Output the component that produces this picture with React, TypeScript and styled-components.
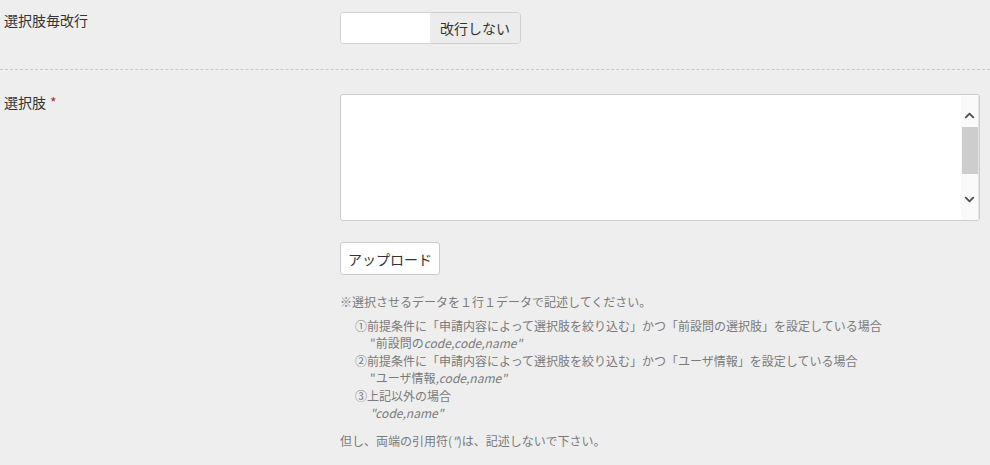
import React from "react";
import styled, { createGlobalStyle } from "styled-components";
import { ChevronUp, ChevronDown } from "lucide-react";

const GlobalStyle = createGlobalStyle`
  body {
    margin: 0;
    background: #eeeeee;
    font-family: "Noto Sans CJK JP", "Noto Sans", sans-serif;
    color: #333;
  }
`;

const Page = styled.div`
  width: 990px;
`;

const Row = styled.div<{ $divider?: boolean; $top: number; $bottom: number }>`
  display: grid;
  grid-template-columns: 340px 1fr;
  padding: ${(p) => p.$top}px 10px ${(p) => p.$bottom}px 0;
  border-bottom: ${(p) => (p.$divider ? "1px dashed #c8c8c8" : "none")};
`;

const Label = styled.div`
  padding-left: 4px;
  font-size: 14px;
  line-height: 16px;
  color: #333;
`;

const Required = styled.span`
  color: #a83232;
  margin-left: 4px;
`;

const Field = styled.div`
  display: flex;
  flex-direction: column;
  align-items: flex-start;
`;

const Toggle = styled.div`
  display: flex;
  width: 181px;
  height: 32px;
  box-sizing: border-box;
  border: 1px solid #cfcfcf;
  border-radius: 4px;
  overflow: hidden;
`;

const ToggleKnob = styled.div`
  width: 89px;
  background: #fff;
`;

const ToggleText = styled.div`
  flex: 1;
  display: flex;
  align-items: center;
  justify-content: center;
  background: #ececec;
  font-size: 14px;
  color: #333;
`;

const TextBox = styled.div`
  display: flex;
  width: 640px;
  height: 127px;
  box-sizing: border-box;
  border: 1px solid #cccccc;
  border-radius: 3px;
  background: #fff;
  overflow: hidden;
`;

const TextInput = styled.textarea`
  flex: 1;
  border: none;
  outline: none;
  resize: none;
  padding: 6px 8px;
  font-family: inherit;
  font-size: 14px;
  background: transparent;
`;

const ScrollRail = styled.div`
  width: 17px;
  display: flex;
  flex-direction: column;
  align-items: center;
  padding: 12px 0 12px;
  background: #fafafa;
  border-right: 1px solid #e4e4e4;
  color: #4f4f4f;
`;

const ScrollButton = styled.div`
  height: 17px;
  display: flex;
  align-items: center;
  justify-content: center;
`;

const ScrollThumb = styled.div`
  width: 16px;
  height: 47px;
  margin-top: 3px;
  background: #cdcdcd;
`;

const Spacer = styled.div`
  flex: 1;
`;

const UploadButton = styled.button`
  margin-top: 21px;
  height: 33px;
  padding: 0 7px;
  background: #fff;
  border: 1px solid #cccccc;
  border-radius: 3px;
  font-family: inherit;
  font-size: 14px;
  color: #333;
`;

const Notes = styled.div`
  margin-top: 18px;
  font-size: 12px;
  line-height: 17.5px;
  color: #7a7a7a;
`;

const NoteList = styled.div`
  margin: 6px 0 10px;
  padding-left: 15px;
`;

const Sub = styled.div`
  padding-left: 15px;
`;

const items = [
  {
    head: "①前提条件に「申請内容によって選択肢を絞り込む」かつ「前設問の選択肢」を設定している場合",
    jp: "\"前設問の",
    code: "code,code,name\"",
  },
  {
    head: "②前提条件に「申請内容によって選択肢を絞り込む」かつ「ユーザ情報」を設定している場合",
    jp: "\"ユーザ情報",
    code: ",code,name\"",
  },
  {
    head: "③上記以外の場合",
    jp: "",
    code: "\"code,name\"",
  },
];

const App = () => {
  return (
    <Page>
      <GlobalStyle />
      <Row $divider $top={12} $bottom={25}>
        <Label>選択肢毎改行</Label>
        <Field>
          <Toggle>
            <ToggleKnob />
            <ToggleText>改行しない</ToggleText>
          </Toggle>
        </Field>
      </Row>
      <Row $top={24} $bottom={10}>
        <Label>
          選択肢<Required>*</Required>
        </Label>
        <Field>
          <TextBox>
            <TextInput />
            <ScrollRail>
              <ScrollButton>
                <ChevronUp size={15} strokeWidth={3} />
              </ScrollButton>
              <ScrollThumb />
              <Spacer />
              <ScrollButton>
                <ChevronDown size={15} strokeWidth={3} />
              </ScrollButton>
            </ScrollRail>
          </TextBox>
          <UploadButton>アップロード</UploadButton>
          <Notes>
            <div>※選択させるデータを１行１データで記述してください。</div>
            <NoteList>
              {items.map((item) => (
                <div key={item.head}>
                  <div>{item.head}</div>
                  <Sub>
                    {item.jp}
                    <em>{item.code}</em>
                  </Sub>
                </div>
              ))}
            </NoteList>
            <div>
              但し、両端の引用符(<em>"</em>)は、記述しないで下さい。
            </div>
          </Notes>
        </Field>
      </Row>
    </Page>
  );
};

export default App;
